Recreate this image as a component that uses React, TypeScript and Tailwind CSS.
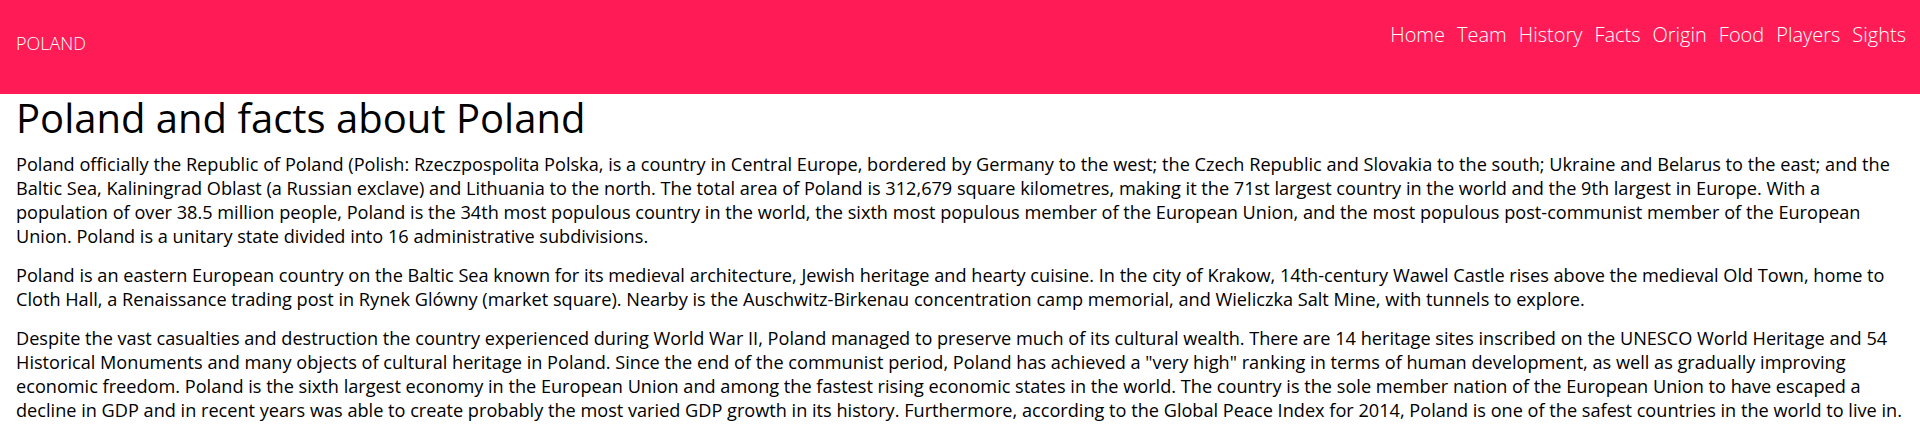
const links = ["Home", "Team", "History", "Facts", "Origin", "Food", "Players", "Sights"];

export default function App() {
  return (
    <div className="min-h-screen bg-white text-black" style={{ fontFamily: '"Open Sans", sans-serif' }}>
      <header className="flex h-[94px] items-start justify-between bg-[#ff1b55] pl-[16px] pr-[14px]">
        <a href="#" className="mt-[30px] text-[18px] leading-[27px] font-light text-white">POLAND</a>
        <nav className="mt-[20px]">
          <ul className="flex gap-[12px]">
            {links.map((label) => (
              <li key={label}>
                <a href="#" className="text-[20px] leading-[30px] font-light text-white">
                  {label}
                </a>
              </li>
            ))}
          </ul>
        </nav>
      </header>

      <main className="pl-[16px] pr-[10px]">
        <h1 className="text-[40px] leading-[48px]">Poland and facts about Poland</h1>
        <p className="mt-[10px] mb-[15px] text-[18.15px] leading-[24px]">
          Poland officially the Republic of Poland (Polish: Rzeczpospolita Polska, is a country in Central Europe,
          bordered by Germany to the west; the Czech Republic and Slovakia to the south; Ukraine and Belarus to the
          east; and the Baltic Sea, Kaliningrad Oblast (a Russian exclave) and Lithuania to the north. The total area
          of Poland is 312,679 square kilometres, making it the 71st largest country in the world and the 9th largest
          in Europe. With a population of over 38.5 million people, Poland is the 34th most populous country in the
          world, the sixth most populous member of the European Union, and the most populous post-communist member of
          the European Union. Poland is a unitary state divided into 16 administrative subdivisions.
        </p>
        <p className="my-[15px] text-[18.15px] leading-[24px]">
          Poland is an eastern European country on the Baltic Sea known for its medieval architecture, Jewish heritage
          and hearty cuisine. In the city of Krakow, 14th-century Wawel Castle rises above the medieval Old Town, home
          to Cloth Hall, a Renaissance trading post in Rynek Glówny (market square). Nearby is the Auschwitz-Birkenau
          concentration camp memorial, and Wieliczka Salt Mine, with tunnels to explore.
        </p>
        <p className="my-[15px] text-[18.15px] leading-[24px]">
          Despite the vast casualties and destruction the country experienced during World War II, Poland managed to
          preserve much of its cultural wealth. There are 14 heritage sites inscribed on the UNESCO World Heritage and
          54 Historical Monuments and many objects of cultural heritage in Poland. Since the end of the communist
          period, Poland has achieved a "very high" ranking in terms of human development, as well as gradually
          improving economic freedom. Poland is the sixth largest economy in the European Union and among the fastest
          rising economic states in the world. The country is the sole member nation of the European Union to have
          escaped a decline in GDP and in recent years was able to create probably the most varied GDP growth in its
          history. Furthermore, according to the Global Peace Index for 2014, Poland is one of the safest countries in
          the world to live in.
        </p>
      </main>
    </div>
  );
}
